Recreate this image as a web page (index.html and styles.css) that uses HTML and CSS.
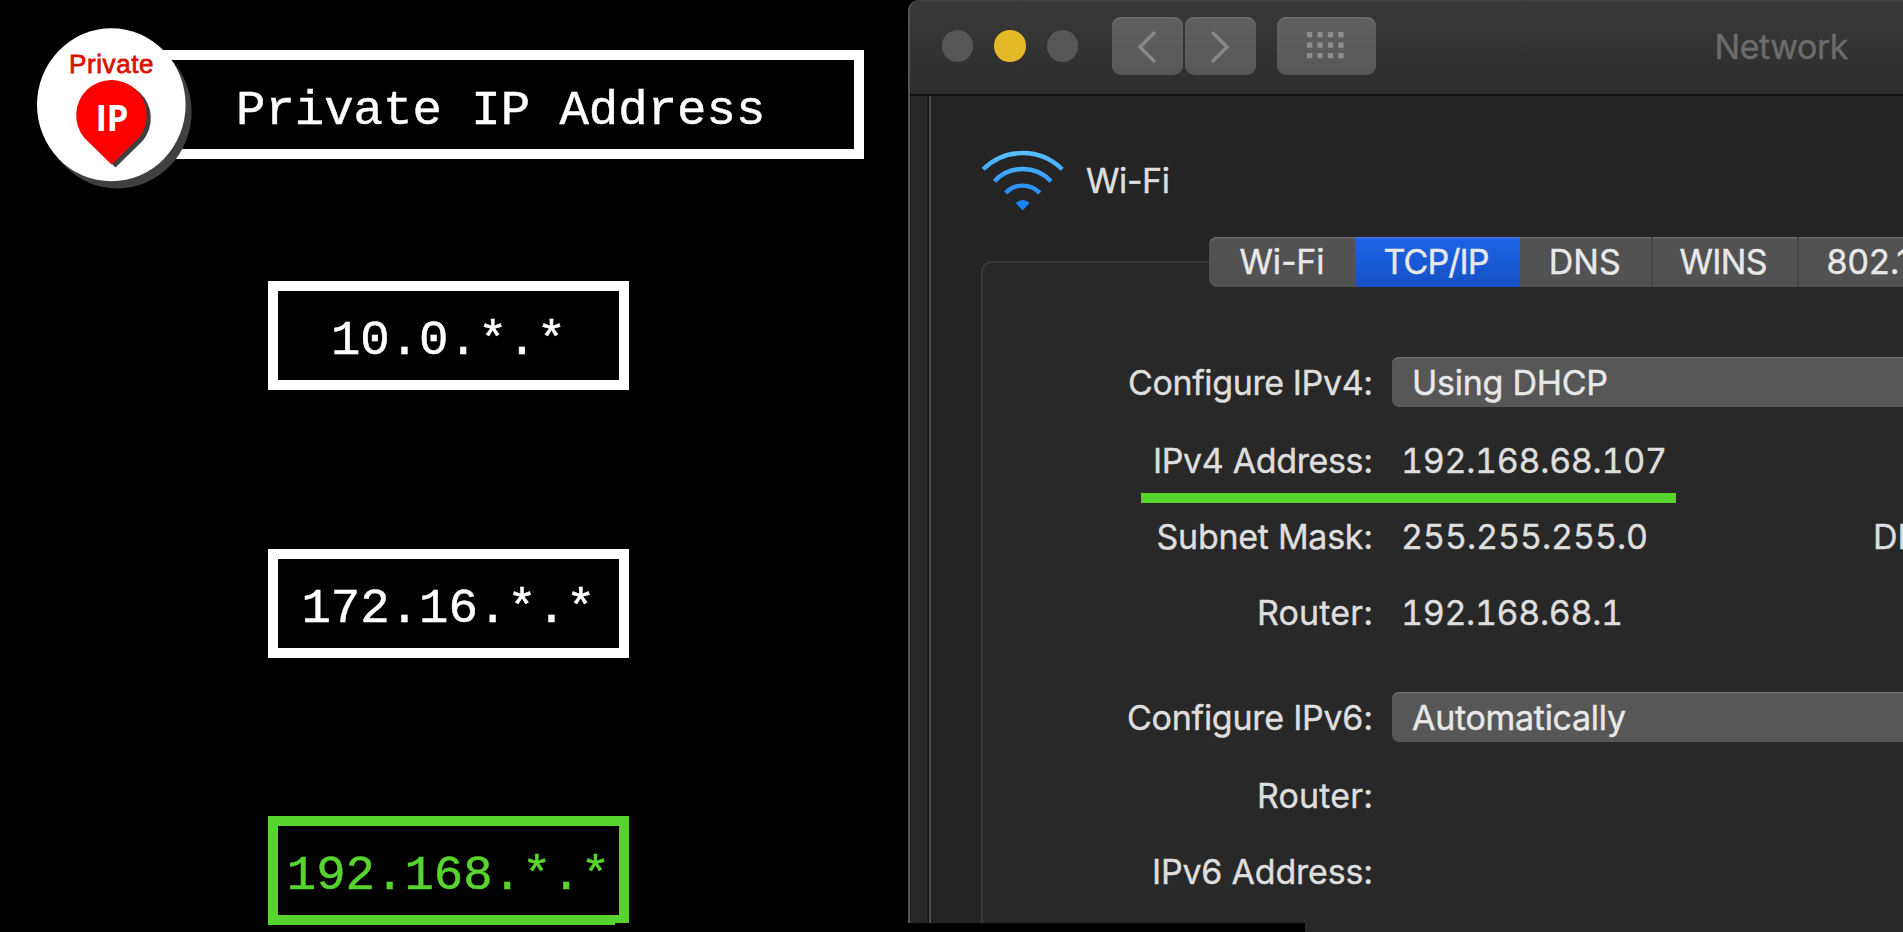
FILE: index.html
```
<!DOCTYPE html>
<html lang="en">
<head>
<meta charset="utf-8">
<title>Private IP Address</title>
<link rel="stylesheet" href="styles.css">
</head>
<body>
<main class="stage">
  <section class="slide">
    <header class="title">
      <h1 class="title-text">Private IP Address</h1>
      <svg class="badge" width="165" height="170" viewBox="30 22 165 170">
        <ellipse cx="117.3" cy="112" rx="74.3" ry="76.5" fill="#404040"/>
        <ellipse cx="111.3" cy="104.8" rx="74.3" ry="76.5" fill="#fff"/>
        <path transform="translate(4 3)" d="M111.5 164.5L84.5 138A35.3 35.3 0 1 1 138.5 138Z" fill="#404040"/>
        <path d="M111.5 164.5L84.5 138A35.3 35.3 0 1 1 138.5 138Z" fill="#f00"/>
        <text class="badge-name" x="69" y="73.3" textLength="84.5">Private</text>
        <text class="badge-ip" x="95.5" y="130.5" textLength="33">IP</text>
      </svg>
    </header>
    <div class="range">10.0.*.*</div>
    <div class="range">172.16.*.*</div>
    <div class="range range-match">192.168.*.*</div>
  </section>

  <section class="window">
    <header class="titlebar">
      <i class="light"></i><i class="light light-min"></i><i class="light"></i>
      <div class="nav">
        <span class="btn"><svg width="70" height="57" viewBox="0 0 70 57"><path d="M42 15L28 29L42 43"/></svg></span>
        <span class="btn"><svg width="70" height="57" viewBox="0 0 70 57"><path d="M28 15L42 29L28 43"/></svg></span>
      </div>
      <span class="btn btn-grid"><svg width="38" height="28" viewBox="0 0 38 28"><g id="r"><rect width="5.3" height="5.3"/><rect x="10.4" width="5.3" height="5.3"/><rect x="20.8" width="5.3" height="5.3"/><rect x="31.3" width="5.3" height="5.3"/></g><use href="#r" y="10.5"/><use href="#r" y="21"/></svg></span>
      <span class="window-title" data-width="134">Network</span>
    </header>
    <div class="body">
      <div class="gutter"></div>
      <div class="pane">
        <div class="service">
          <svg width="84" height="64" viewBox="981 149 84 64">
            <defs><linearGradient id="sky" gradientUnits="userSpaceOnUse" x1="0" y1="150" x2="0" y2="211"><stop offset="0" stop-color="#5cc4ff"/><stop offset=".65" stop-color="#2b90ff"/><stop offset="1" stop-color="#147cff"/></linearGradient></defs>
            <g fill="none" stroke="url(#sky)" stroke-width="4.4">
              <path d="M983.2 169.3A56 56 0 0 1 1062.2 169.3"/>
              <path d="M994.4 181.2A39 39 0 0 1 1051 181.2"/>
              <path d="M1005.7 192.9A23.5 23.5 0 0 1 1039.7 192.9"/>
            </g>
            <path d="M1015.8 203Q1022.7 197 1029.6 203L1022.7 210.5Z" fill="#1a84ff"/>
          </svg>
          <span data-width="84">Wi-Fi</span>
        </div>
        <nav class="tabs">
          <span class="tab tab-wifi"><b data-width="85">Wi-Fi</b></span>
          <span class="tab tab-tcp"><b data-width="106">TCP/IP</b></span>
          <span class="tab tab-dns"><b data-width="72">DNS</b></span>
          <span class="tab tab-wins"><b data-width="88">WINS</b></span>
          <span class="tab tab-8021x"><b>802.1X</b></span>
        </nav>
        <div class="group">
          <div class="row row-cfg4"><span class="label"><b data-width="245">Configure IPv4:</b></span><span class="popup"><b data-width="196">Using DHCP</b></span></div>
          <div class="row row-addr4"><span class="label"><b data-width="220">IPv4 Address:</b></span><span class="value"><b data-width="266">192.168.68.107</b></span><i class="marker"></i></div>
          <div class="row row-mask"><span class="label"><b data-width="216.5">Subnet Mask:</b></span><span class="value"><b data-width="247">255.255.255.0</b></span><span class="client">DHCP Client ID:</span></div>
          <div class="row row-router4"><span class="label"><b data-width="116">Router:</b></span><span class="value"><b data-width="222">192.168.68.1</b></span></div>
          <div class="row row-cfg6"><span class="label"><b data-width="246">Configure IPv6:</b></span><span class="popup"><b data-width="214">Automatically</b></span></div>
          <div class="row row-router6"><span class="label"><b data-width="116">Router:</b></span></div>
          <div class="row row-addr6"><span class="label"><b data-width="221">IPv6 Address:</b></span></div>
        </div>
      </div>
    </div>
  </section>
  <div class="strip"></div>
</main>
<script src="fit.js"></script>
</body>
</html>
```
FILE: styles.css
```
* { box-sizing: border-box; }
body { margin: 0; background: #000; overflow: hidden; }
b { font-weight: inherit; display: inline-block; }

.stage {
  position: relative;
  display: flex;
  width: 1903px;
  height: 932px;
  overflow: hidden;
  background: #000;
}

/* Left slide */
.slide {
  width: 908px;
  flex: none;
  padding: 50px 44px 0 117px;
  display: flex;
  flex-direction: column;
  color: #fff;
  font: 49px/60px "Liberation Mono", monospace;
  -webkit-text-stroke: .5px currentColor;
}
.title {
  position: relative;
  height: 109px;
  flex: none;
  margin-bottom: 122px;
  border: 10px solid #fff;
  padding: 21px 0 0 109px;
}
.title-text { margin: 0; font: inherit; white-space: nowrap; }
.badge { position: absolute; left: -97px; top: -38px; -webkit-text-stroke: 0; }
.badge-name { font: 26px "Liberation Sans", sans-serif; fill: #d81400; stroke: #d81400; stroke-width: .8px; }
.badge-ip { font: bold 35px "Open Sans", sans-serif; fill: #fff; }
.range {
  width: 361px;
  height: 109px;
  flex: none;
  margin: 0 0 158.7px 151px;
  border: 10px solid #fff;
  padding-top: 20px;
  text-align: center;
}
.range-match { border-color: #58d42e; color: #58d42e; }

/* Network preferences window */
.window {
  flex: 1;
  min-width: 0;
  overflow: hidden;
  display: flex;
  flex-direction: column;
  border-left: 2px solid #545454;
  border-top: 1px solid #444;
  border-top-left-radius: 11px;
  background: #242424;
  color: #dedede;
  font: 34px/40px Inter, "Liberation Sans", sans-serif;
  -webkit-text-stroke: .4px currentColor;
  white-space: nowrap;
}
.titlebar {
  height: 95px;
  flex: none;
  display: flex;
  align-items: center;
  padding: 0 0 3px 31.5px;
  background: linear-gradient(#393939, #2d2d2d);
  border-bottom: 2px solid #101010;
}
.light { width: 31.5px; height: 31.5px; margin-right: 21px; border-radius: 50%; background: #565656; flex: none; }
.light-min { background: #e3b927; }
.nav { display: flex; gap: 2.5px; margin: 0 21px 0 13px; }
.btn {
  width: 70.5px;
  height: 57.5px;
  flex: none;
  display: flex;
  align-items: center;
  justify-content: center;
  border-radius: 9px;
  background: linear-gradient(#606060, #575757);
  box-shadow: inset 0 1.5px 0 #6e6e6e;
}
.btn path { fill: none; stroke: #888; stroke-width: 3.5; stroke-linecap: round; }
.btn-grid { width: 99.5px; fill: #8d8d8d; }
.window-title { margin-left: 338.5px; padding-top: 1px; color: #6c6c6c; }

.body { flex: 1; display: flex; min-height: 0; }
.gutter { width: 21px; flex: none; background: #272727; border-right: 2px solid #4c4c4c; box-shadow: inset -1.5px 0 0 #151515; }
.pane { flex: 1; min-width: 0; display: flex; flex-direction: column; }
.service { height: 141px; flex: none; display: flex; align-items: flex-start; padding: 53px 0 0 50px; }
.service span { margin: 12px 0 0 21px; }

.tabs {
  position: relative;
  z-index: 1;
  display: flex;
  height: 50px;
  flex: none;
  margin-left: 278px;
  border-radius: 8px 0 0 8px;
  overflow: hidden;
  background: #525252;
  box-shadow: inset 0 1.5px 0 #6a6a6a;
  color: #e8e8e8;
}
.tab { flex: none; line-height: 50px; text-align: center; }
.tab-wifi { width: 146px; }
.tab-tcp { width: 165px; padding-right: 2px; background: linear-gradient(#1b63e6, #1751c6); box-shadow: inset 0 1.5px 0 #4478d8; }
.tab-dns { width: 132.5px; padding-right: 1px; border-right: 2px solid #454545; }
.tab-wins { width: 146px; padding-right: 2px; border-right: 2px solid #454545; }
.tab-8021x { padding-left: 28px; }

.group {
  flex: 1;
  min-height: 0;
  margin: -26px 0 0 50px;
  padding-top: 81px;
  border: solid #383838;
  border-width: 2px 0 0 2px;
  border-top-left-radius: 11px;
  background: #282828;
}
.row { position: relative; display: grid; grid-template-columns: 390px 481px 1fr; align-items: center; }
.row-cfg4 { height: 76px; }
.row-addr4 { height: 80px; }
.row-mask { height: 72px; }
.row-router4 { height: 80px; margin-bottom: 24px; }
.row-cfg6 { height: 82px; }
.row-router6 { height: 74px; }
.row-addr6 { height: 78px; }
.label, .value, .client { padding-top: 1px; }
.label { text-align: right; }
.value { padding-left: 28px; font-variant-numeric: tabular-nums; }
.client { padding-left: 19px; }
.popup {
  grid-column: 2 / 4;
  height: 50px;
  margin-left: 19px;
  padding-left: 20px;
  border-radius: 7px 0 0 7px;
  background: #575757;
  box-shadow: inset 0 1.5px 0 #6e6e6e;
  line-height: 51px;
  color: #e8e8e8;
}
.marker { position: absolute; left: 158px; top: 73px; width: 535px; height: 10px; z-index: 1; background: #58d42e; }

.strip { position: absolute; left: 615px; top: 923px; width: 690px; height: 9px; background: #000; }
```
FILE: fit.js
```
// Tracks each text out or in so that it takes the width in its data-width.
document.querySelectorAll('[data-width]').forEach(function (el) {
  var natural = el.getBoundingClientRect().width;
  var spacing = (Number(el.dataset.width) - natural) / (el.textContent.length - 1);
  el.style.letterSpacing = spacing + 'px';
  el.style.marginRight = -spacing + 'px';
});
```
